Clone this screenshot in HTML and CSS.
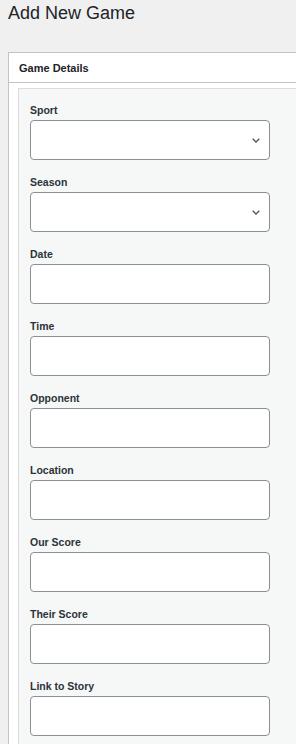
FILE: index.html
```html
<!DOCTYPE html>
<html lang="en">
<head>
<meta charset="utf-8">
<title>Add New Game</title>
<link rel="stylesheet" href="styles.css">
</head>
<body>
<div class="wrap">
  <h1 class="page-title">Add New Game</h1>
  <div class="postbox">
    <div class="postbox-header">Game Details</div>
    <div class="inside">
      <div class="fields">
        <div class="field">
          <label class="field-label" for="sport">Sport</label>
          <div class="select-wrap">
            <select id="sport" class="control"><option></option></select>
            <svg class="chevron" width="8" height="5" viewBox="0 0 8 5"><polyline points="0.7,0.7 4,4 7.3,0.7" fill="none" stroke="#50575e" stroke-width="1.3"/></svg>
          </div>
        </div>
        <div class="field">
          <label class="field-label" for="season">Season</label>
          <div class="select-wrap">
            <select id="season" class="control"><option></option></select>
            <svg class="chevron" width="8" height="5" viewBox="0 0 8 5"><polyline points="0.7,0.7 4,4 7.3,0.7" fill="none" stroke="#50575e" stroke-width="1.3"/></svg>
          </div>
        </div>
        <div class="field">
          <label class="field-label" for="date">Date</label>
          <input id="date" class="control" type="text">
        </div>
        <div class="field">
          <label class="field-label" for="time">Time</label>
          <input id="time" class="control" type="text">
        </div>
        <div class="field">
          <label class="field-label" for="opponent">Opponent</label>
          <input id="opponent" class="control" type="text">
        </div>
        <div class="field">
          <label class="field-label" for="location">Location</label>
          <input id="location" class="control" type="text">
        </div>
        <div class="field">
          <label class="field-label" for="our">Our Score</label>
          <input id="our" class="control" type="text">
        </div>
        <div class="field">
          <label class="field-label" for="their">Their Score</label>
          <input id="their" class="control" type="text">
        </div>
        <div class="field">
          <label class="field-label" for="link">Link to Story</label>
          <input id="link" class="control" type="text">
        </div>
      </div>
    </div>
  </div>
</div>
</body>
</html>
```
FILE: styles.css
```css
html, body {
  margin: 0;
  padding: 0;
}
body {
  background: #f0f0f1;
  font-family: "Liberation Sans", Arial, Helvetica, sans-serif;
  color: #1d2327;
  overflow: hidden;
  height: 744px;
}
.wrap {
  padding: 2px 0 0 8px;
}
.page-title {
  margin: 0;
  font-size: 18px;
  line-height: 23px;
  font-weight: 400;
  color: #1d2327;
}
.postbox {
  margin-top: 27px;
  background: #fff;
  border: 1px solid #c3c4c7;
  border-right: none;
  border-bottom: none;
}
.postbox-header {
  height: 29px;
  display: flex;
  align-items: center;
  padding: 0 10px;
  border-bottom: 1px solid #c3c4c7;
  font-size: 11px;
  font-weight: 700;
  color: #1d2327;
}
.inside {
  padding: 5px 0 0 9px;
}
.fields {
  background: #f6f7f7;
  border: 1px solid #dcdcde;
  border-right: none;
  border-bottom: none;
  padding: 14px 0 8px 11px;
}
.field {
  margin-bottom: 15px;
}
.field:last-child {
  margin-bottom: 0;
}
.field-label {
  display: block;
  font-size: 10.5px;
  line-height: 14px;
  font-weight: 700;
  color: #2c3338;
  margin-bottom: 3px;
}
.control {
  display: block;
  box-sizing: border-box;
  width: 240px;
  height: 40px;
  margin: 0;
  padding: 0 8px;
  background: #fff;
  border: 1px solid #8c8f94;
  border-radius: 4px;
  font-family: inherit;
  font-size: 13px;
  color: #2c3338;
  -webkit-appearance: none;
  appearance: none;
  outline: none;
}
.select-wrap {
  position: relative;
  width: 240px;
}
.chevron {
  position: absolute;
  right: 10px;
  top: 18px;
}
```
